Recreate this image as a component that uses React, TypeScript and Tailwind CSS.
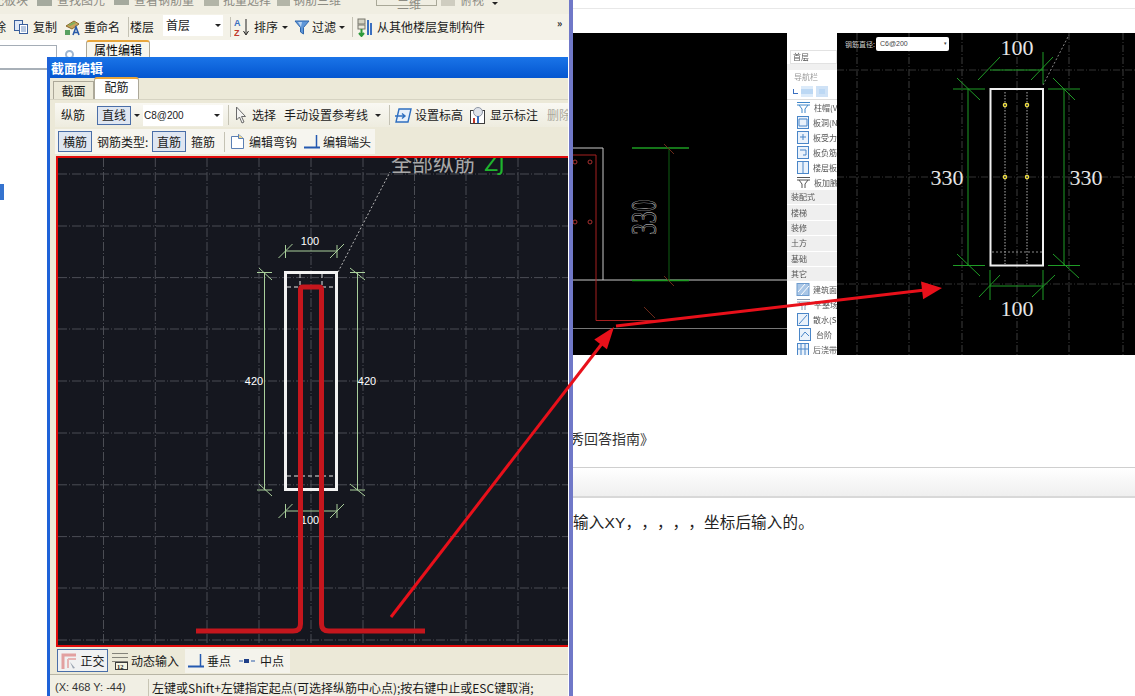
import React from "react";

const cjk = "font-['Noto_Sans_CJK_SC','Liberation_Sans',sans-serif]";

function Caret() {
  return <span className="inline-block w-0 h-0 border-x-[3px] border-x-transparent border-t-[3px] border-t-[#222]" />;
}

function Sep({ className = "" }: { className?: string }) {
  return <span className={`w-px h-[20px] bg-[#c4c2b4] ${className}`} />;
}

function CopyIcon() {
  return (
    <svg width="16" height="16" viewBox="0 0 16 16">
      <rect x="1.5" y="1.5" width="8" height="10" fill="#dfe8f6" stroke="#3a5f9c" />
      <rect x="6.5" y="5.5" width="8" height="9" fill="#fff" stroke="#3a5f9c" />
      <path d="M8 8h5M8 10h5M8 12h5" stroke="#6f8fc0" />
    </svg>
  );
}

function RenameIcon() {
  return (
    <svg width="17" height="17" viewBox="0 0 17 17">
      <path d="M2 7 10 2l5 3-7 5z" fill="#c9a35a" stroke="#8a6a2c" />
      <path d="M4 6l6-3 2 1-6 3z" fill="#7fb05a" />
      <rect x="1" y="11" width="5" height="5" fill="#58a060" />
      <path d="M9 16l3-8 3 8M10 13.5h4" fill="none" stroke="#2a5aa8" strokeWidth="1.6" />
    </svg>
  );
}

function SortIcon() {
  return (
    <svg width="17" height="19" viewBox="0 0 17 19">
      <text x="0" y="8" fontSize="9" fontWeight="700" fill="#3a6fc0" fontFamily="Liberation Sans">A</text>
      <text x="0" y="18" fontSize="9" fontWeight="700" fill="#c0392b" fontFamily="Liberation Sans">Z</text>
      <path d="M12 1v15M9.5 13l2.5 4 2.5-4" fill="none" stroke="#222" />
    </svg>
  );
}

function FilterIcon() {
  return (
    <svg width="16" height="16" viewBox="0 0 16 16">
      <path d="M1 2h14L9.5 8.5V15l-3-2V8.5z" fill="#5f97d8" stroke="#2f66ac" />
      <path d="M4 3h4L7 8z" fill="#b8d4f2" />
    </svg>
  );
}

function FloorCopyIcon() {
  return (
    <svg width="16" height="19" viewBox="0 0 16 19">
      <rect x="1" y="1" width="7" height="5" fill="#d4d2c4" stroke="#77766c" />
      <rect x="1" y="7" width="7" height="4" fill="#e9e7da" stroke="#77766c" />
      <path d="M4.5 11v6M2 15l2.5 3 2.5-3" stroke="#2d9a3c" strokeWidth="2" fill="none" />
      <rect x="10" y="2" width="2" height="15" fill="#3a6fc0" />
      <rect x="13" y="5" width="2" height="12" fill="#3a6fc0" />
    </svg>
  );
}

function CursorIcon() {
  return (
    <svg width="12" height="18" viewBox="0 0 12 18">
      <path d="M1.5 1v13l3-3 2.5 6 2-1-2.5-5.500H10.500z" fill="#f4f4f2" stroke="#6a6a6a" />
    </svg>
  );
}

function ElevationIcon() {
  return (
    <svg width="17" height="17" viewBox="0 0 17 17">
      <path d="M4 2h12l-3 13H1z" fill="#e8f0fa" stroke="#2f6fc0" strokeWidth="1.400" />
      <path d="M0 9h9M7 6.500 10 9l-3 2.500" fill="none" stroke="#2f6fc0" strokeWidth="1.400" />
    </svg>
  );
}

function LabelIcon() {
  return (
    <svg width="15" height="17" viewBox="0 0 15 17">
      <rect x="0.500" y="3.500" width="14" height="13" fill="#fff" stroke="#3c3c3c" />
      <circle cx="8" cy="5" r="4.500" fill="#dfe3ea" stroke="#8d95a3" />
      <rect x="3" y="11" width="2" height="5" fill="#c0392b" />
      <rect x="7" y="9" width="2" height="7" fill="#3a6fc0" />
    </svg>
  );
}

function HookIcon() {
  return (
    <svg width="16" height="17" viewBox="0 0 16 17">
      <path d="M1.500 3.500h7v-2l5 4v10h-12z" fill="#fff" stroke="#5a7fb4" />
      <path d="M8.500 1.500v4h5" fill="#f3d98c" stroke="#5a7fb4" />
    </svg>
  );
}

function EndIcon() {
  return (
    <svg width="16" height="16" viewBox="0 0 16 16">
      <path d="M0 13.500h16" stroke="#2459b0" strokeWidth="2" />
      <path d="M12.500 1v13" stroke="#2459b0" strokeWidth="1.500" />
    </svg>
  );
}

function MidIcon() {
  return (
    <svg width="16" height="8" viewBox="0 0 16 8">
      <path d="M0 4h4M12 4h4" stroke="#6f8fc0" strokeWidth="1.500" />
      <rect x="5" y="2" width="5" height="4" fill="#1f3f88" />
    </svg>
  );
}

function OrthoIcon() {
  return (
    <svg width="18" height="18" viewBox="0 0 18 18">
      <path d="M3 17V3h13" fill="none" stroke="#e2a0a0" strokeWidth="3" />
      <path d="M8 7v9M8 7h8" stroke="#e6b4b4" strokeWidth="2" />
      <path d="M10 10l5 6-2 .5z" fill="#9ba5b2" />
    </svg>
  );
}

function DynamicIcon() {
  return (
    <svg width="16" height="18" viewBox="0 0 16 18">
      <path d="M0 1.500h16M0 5.500h16M0 9.500h16" stroke="#85837a" />
      <rect x="3.500" y="10.500" width="12" height="7" fill="#f7f4e2" stroke="#3c3c3c" />
      <text x="5" y="16.500" fontSize="6.500" fontWeight="700" fill="#222" fontFamily="Liberation Serif">12</text>
    </svg>
  );
}

function ToolButton({ children, className = "" }: { children: React.ReactNode; className?: string }) {
  return (
    <span className={`flex items-center justify-center border border-[#4a6ea8] bg-[#dfe6f1] ${className}`}>{children}</span>
  );
}

function AppToolbars() {
  return (
    <>
      <div className="h-[14px] shrink-0 overflow-hidden bg-[#f0eee2]">
        <div className="flex items-center h-[12px] -mt-[6px] text-[12px] text-[#8d8c84] whitespace-nowrap [&>*]:shrink-0">
          <span className="ml-[-8px]">配板块</span>
          <span className="w-[15px] h-[12px] ml-[9px] bg-[#a5aa9e]" />
          <span className="ml-[5px]">查找图元</span>
          <span className="w-[15px] h-[10px] ml-[9px] bg-[#a5aa9e]" />
          <span className="ml-[5px]">查看钢筋量</span>
          <span className="w-[15px] h-[12px] ml-[10px] bg-[#b3b5a8]" />
          <span className="ml-[4px]">批量选择</span>
          <span className="w-[13px] h-[12px] ml-[6px] bg-[#b3b5a8]" />
          <span className="ml-[3px]">钢筋三维</span>
          <span className="w-[61px] h-[12px] ml-[35px] border border-[#a9a898] pl-[20px]">二维</span>
          <span className="w-[14px] h-[12px] ml-[4px] bg-[#cfcdc0]" />
          <span className="ml-[5px]">俯视</span>
          <span className="ml-[8px]"><Caret /></span>
        </div>
      </div>
      <div className="h-[26px] shrink-0 flex items-center bg-[#f4f2e8] text-[12px] text-[#1a1a1a] whitespace-nowrap [&>*]:shrink-0">
        <span className="ml-[-6px] w-[12px]">除</span>
        <span className="ml-[7px] flex"><CopyIcon /></span>
        <span className="ml-[4px]">复制</span>
        <span className="ml-[7px] flex"><RenameIcon /></span>
        <span className="ml-[3px]">重命名</span>
        <Sep className="ml-[8px]" />
        <span className="ml-[1px]">楼层</span>
        <span className="ml-[9px] w-[60px] h-[21px] bg-white flex items-center justify-between pl-[3px] pr-[2px] -mt-[4px]">
          首层
          <Caret />
        </span>
        <Sep className="ml-[7px]" />
        <span className="ml-[3px] flex"><SortIcon /></span>
        <span className="ml-[3px]">排序</span>
        <span className="ml-[4px] flex"><Caret /></span>
        <span className="ml-[6px] flex"><FilterIcon /></span>
        <span className="ml-[2px]">过滤</span>
        <span className="ml-[3px] flex"><Caret /></span>
        <Sep className="ml-[7px]" />
        <span className="ml-[4px] flex"><FloorCopyIcon /></span>
        <span className="ml-[4px]">从其他楼层复制构件</span>
        <span className="ml-[72px] -mt-[10px] text-[10px] font-bold">»</span>
      </div>
      <div className="h-[18px] shrink-0 flex items-start bg-white pl-[86px]">
        <span className="w-[64px] h-[18px] flex items-center justify-center border-x border-[#aca899] border-t-2 border-t-[#e8a63c] rounded-t-[3px] bg-[#f7f6ee] text-[12px]">
          属性编辑
        </span>
      </div>
    </>
  );
}

function LeftFolder() {
  return (
    <div className="relative flex-1 bg-white">
      <div className="absolute left-0 -top-[13px] w-[57px] h-[24px] border-y border-r border-y-[#a5adb6] border-r-[#a5adb6] bg-white" />
      <div className="absolute left-[65px] -top-[8px] w-[9px] h-[9px] rounded-full border-2 border-[#9fb6d0]" />
      <div className="absolute left-0 top-[10px] w-[48px] h-[2px] bg-[#a8b0b8]" />
      <div className="absolute left-0 top-[126px] w-[4px] h-[16px] bg-[#3573cf]" />
    </div>
  );
}

const gridX = [103.5, 155.3, 207, 259, 311, 363, 414.5, 466, 518];
const gridY = [174, 226, 277.6, 329, 381, 433, 484.8, 536.6, 588, 640];

function Tick({ x, y }: { x: number; y: number }) {
  return <path d={`M${x - 7} ${y + 7}L${x + 7} ${y - 7}`} stroke="#a9cf9b" strokeWidth="1" />;
}

function SectionCanvas() {
  const green = "#a9cf9b";
  return (
    <svg className="block w-full h-full" viewBox="56 156 512 491">
      <rect x="56" y="156" width="512" height="491" fill="#15171f" />
      {gridX.map((x) => (
        <path key={x} d={`M${x} 158V645`} stroke="#4b4d54" strokeDasharray="9 2 1 2" />
      ))}
      {gridY.map((y) => (
        <path key={y} d={`M58 ${y}H568`} stroke="#4b4d54" strokeDasharray="9 2 1 2" />
      ))}
      <path d="M338 272 390 172" stroke="#b8b8b8" strokeDasharray="2 2" />
      <text x="391" y="171" fontSize="21" fill="#a8a8a8" fontFamily="Noto Sans CJK SC">全部纵筋</text>
      <text x="484" y="171" fontSize="21" fill="#1fb52e" fontFamily="DejaVu Sans">ZJ</text>

      <path d="M285.500 251H337" stroke={green} />
      <path d="M285.500 245V258M337 245V258" stroke={green} />
      <Tick x={285.500} y={251} />
      <Tick x={337} y={251} />
      <text x="310" y="245" textAnchor="middle" fontSize="11" fill="#fff" fontFamily="Liberation Sans">100</text>

      <path d="M264.500 272V490M357.500 272V490" stroke={green} />
      <path d="M257 272.500H272M257 490H272M350 272.500H365M350 490H365" stroke={green} />
      <path d="M259 268 272 280M259 484 272 496M350 268 365 280M350 484 365 496" stroke={green} />
      <text x="254" y="385" textAnchor="middle" fontSize="11" fill="#fff" fontFamily="Liberation Sans">420</text>
      <text x="367" y="385" textAnchor="middle" fontSize="11" fill="#fff" fontFamily="Liberation Sans">420</text>

      <path d="M285.500 511H337" stroke={green} />
      <path d="M285.500 504V518M337 504V518" stroke={green} />
      <Tick x={285.500} y={511} />
      <Tick x={337} y={511} />
      <text x="310" y="524" textAnchor="middle" fontSize="11" fill="#fff" fontFamily="Liberation Sans">100</text>

      <rect x="285.500" y="272.500" width="51" height="217" fill="none" stroke="#f2f2f2" strokeWidth="3" />
      <path d="M287 287H336M287 476H336M300 274V287M322 274V287" stroke="#e8e8e8" strokeDasharray="4 3" />
      <path
        d="M196 631H293Q300.500 631 300.500 624V289.500Q300.500 287 303 287H319Q321.500 287 321.500 289.500V624Q321.500 631 329 631H425"
        fill="none"
        stroke="#c5161d"
        strokeWidth="5"
      />
      <rect x="57" y="157" width="512" height="489" fill="none" stroke="#e20a0a" strokeWidth="2" />
    </svg>
  );
}

function SectionDialog() {
  return (
    <div className="absolute left-[47px] top-[57px] bottom-0 w-[521px] flex flex-col border-l-[3px] border-[#1e62d8] bg-[#ece9d8] text-[12px] text-[#1a1a1a] whitespace-nowrap">
      <div className="h-[21px] shrink-0 flex items-center pl-[1px] bg-gradient-to-b from-[#1a74e8] to-[#0456d0] text-[13px] font-bold text-white">
        截面编辑
      </div>
      <div className="h-[22px] shrink-0 flex items-end pl-[3px] border-b border-[#d6d3c2]">
        <span className="w-[41px] h-[18px] flex items-center justify-center border border-[#aca899] border-b-0 bg-[#ece9d8]">截面</span>
        <span className="w-[45px] h-[22px] flex items-center justify-center border-x border-[#aca899] border-t-2 border-t-[#e8a63c] rounded-t-[3px] bg-white pb-[4px]">配筋</span>
      </div>
      <div className="h-[24px] shrink-0 mt-[3px] ml-[5px] flex items-center pl-[6px] bg-gradient-to-b from-[#f9f8f3] to-[#eeecdf] overflow-hidden [&>*]:shrink-0">
        <span className="w-[24px]">纵筋</span>
        <ToolButton className="ml-[12px] w-[34px] h-[19px]">直线</ToolButton>
        <span className="ml-[3px] flex"><Caret /></span>
        <span className="ml-[3px] w-[80px] h-[21px] bg-white flex items-center justify-between pl-[1px] pr-[3px]">
          <span className="font-['Liberation_Sans',sans-serif] text-[10px]">C8@200</span>
          <Caret />
        </span>
        <Sep className="ml-[5px]" />
        <span className="ml-[6px] flex"><CursorIcon /></span>
        <span className="ml-[5px] w-[24px]">选择</span>
        <span className="ml-[8px] w-[84px]">手动设置参考线</span>
        <span className="ml-[7px] flex"><Caret /></span>
        <Sep className="ml-[8px]" />
        <span className="ml-[5px] flex"><ElevationIcon /></span>
        <span className="ml-[3px] w-[48px]">设置标高</span>
        <span className="ml-[7px] flex"><LabelIcon /></span>
        <span className="ml-[5px] w-[48px]">显示标注</span>
        <span className="ml-[9px] text-[#aaa89c]">删除</span>
      </div>
      <div className="h-[25px] shrink-0 mt-[2px] ml-[5px] flex items-center">
        <div className="flex items-center h-full pl-[3px] pr-[4px] bg-[#f6f5ef]">
          <ToolButton className="w-[34px] h-[21px]">横筋</ToolButton>
          <span className="ml-[5px] w-[52px]">钢筋类型:</span>
          <ToolButton className="ml-[3px] w-[34px] h-[21px]">直筋</ToolButton>
          <span className="ml-[5px] w-[24px]">箍筋</span>
          <Sep className="ml-[9px]" />
          <span className="ml-[5px] flex"><HookIcon /></span>
          <span className="ml-[3px] w-[48px]">编辑弯钩</span>
          <span className="ml-[7px] flex"><EndIcon /></span>
          <span className="ml-[3px] w-[48px]">编辑端头</span>
        </div>
      </div>
      <div className="h-[491px] shrink-0 mt-[2px] ml-[6px]">
        <SectionCanvas />
      </div>
      <div className="h-[28px] shrink-0 flex items-center pl-[7px] border-b border-[#b8b5a5]">
        <ToolButton className="w-[51px] h-[23px] gap-[2px] bg-[#f0f1f2]">
          <OrthoIcon />
          <span>正交</span>
        </ToolButton>
        <span className="ml-[4px] flex"><DynamicIcon /></span>
        <span className="ml-[3px] w-[48px]">动态输入</span>
        <div className="ml-[6px] h-[24px] flex items-center pl-[3px] pr-[6px] bg-[#f4f3ec]">
          <EndIcon />
          <span className="ml-[3px] w-[24px]">垂点</span>
          <span className="ml-[8px] flex"><MidIcon /></span>
          <span className="ml-[5px]">中点</span>
        </div>
      </div>
      <div className="flex-1 flex pt-[4px] bg-[#f1efe4] overflow-hidden">
        <span className="w-[99px] pl-[5px] border-r border-[#c8c5b4] text-[#333] font-['Liberation_Sans',sans-serif] text-[11px]">(X: 468 Y: -44)</span>
        <span className="pl-[3px]">左键或Shift+左键指定起点(可选择纵筋中心点);按右键中止或ESC键取消;</span>
      </div>
    </div>
  );
}

function FirstDrawing() {
  return (
    <svg className="block w-[214px] h-[322px] shrink-0" viewBox="573 33 214 322">
      <rect x="573" y="33" width="214" height="322" fill="#000" />
      <path d="M573 148H603V280M573 280H787" fill="none" stroke="#c9c9c9" />
      <path d="M573 155H596V320.500H660" fill="none" stroke="#a52020" />
      <path d="M573 328.500H787" stroke="#777" />
      <path d="M632 148H689M632 280.500H689" stroke="#1d9c22" strokeWidth="1.500" />
      <path d="M669 148V280" stroke="#0f5f12" />
      <path d="M664 144 674 154M664 276 674 286M644 307 655 318" stroke="#6b2a1a" />
      {[162, 222].map((y) => (
        <g key={y}>
          <circle cx="575" cy={y} r="2" fill="none" stroke="#a83030" />
          <circle cx="590" cy={y} r="2" fill="none" stroke="#a83030" />
        </g>
      ))}
      <text
        transform="translate(656 235) rotate(-90) scale(1.300 1.950)"
        fontSize="18"
        fill="#000"
        stroke="#dcdcdc"
        strokeWidth="0.250"
        fontFamily="Liberation Serif"
      >
        330
      </text>
    </svg>
  );
}

function SideRow({ label, icon }: { label: string; icon: React.ReactNode }) {
  return (
    <div className="h-[15px] flex items-center">
      <span className="w-[17px] ml-[9px] flex justify-center">{icon}</span>
      <span className="ml-[3px] whitespace-nowrap">{label}</span>
    </div>
  );
}

function SideSection({ label }: { label: string }) {
  return <div className="h-[15.4px] pl-[4px] flex items-center bg-[#efefef] border-b border-white">{label}</div>;
}

function CapIcon({ color = "#3f86c9" }: { color?: string }) {
  return (
    <svg width="15" height="13" viewBox="0 0 15 13">
      <path d="M1 1.500h13M1 4h13M3 4l3 4v4M12 4 9 8v4" fill="none" stroke={color} />
    </svg>
  );
}

function BoxIcon({ d = "M4 6h6M7 3v6" }: { d?: string }) {
  return (
    <svg width="14" height="13" viewBox="0 0 14 13">
      <rect x="1.500" y="0.500" width="11" height="12" fill="#eaf2fb" stroke="#4a86c8" />
      <path d={d} fill="none" stroke="#4a86c8" />
    </svg>
  );
}

function HatchIcon() {
  return (
    <svg width="14" height="13" viewBox="0 0 14 13">
      <rect x="1" y="0.500" width="12" height="12" fill="#a9c6e6" stroke="#6f9cce" />
      <path d="M2 9 9 1M5 12 13 3" stroke="#fff" />
    </svg>
  );
}

function SoftwareSidebar() {
  return (
    <div className={`w-[50px] h-[322px] shrink-0 overflow-hidden bg-white text-[8px] text-[#555] blur-[0.5px] ${cjk}`}>
      <div className="h-[17px] bg-white" />
      <div className="ml-[3px] h-[14px] pl-[2px] flex items-center border border-[#e2e2e2]">首层</div>
      <div className="h-[6px] bg-[#f0f0f0]" />
      <div className="h-[13px] pl-[7px] flex items-center text-[#999]">导航栏</div>
      <div className="h-[17px] flex items-center gap-[3px] pl-[6px] border-b border-[#ddd]">
        <span className="w-[5px] h-[5px] border-l border-b border-[#3a6fc0]" />
        <span className="w-[12px] h-[11px] bg-[#bcd8f4] border-y-[3px] border-[#dcebfa]" />
        <span className="w-[12px] h-[11px] bg-[#bcd8f4] border-[3px] border-[#cfe2f6]" />
      </div>
      <SideRow label="柱帽(V)" icon={<CapIcon />} />
      <SideRow label="板洞(N)" icon={<BoxIcon d="M3 3h8v7H3z" />} />
      <SideRow label="板受力" icon={<BoxIcon />} />
      <SideRow label="板负筋(" icon={<BoxIcon d="M4 4h6v5H7" />} />
      <SideRow label="楼层板" icon={<BoxIcon d="M7 0v13" />} />
      <SideRow label="板加腋(" icon={<CapIcon color="#555" />} />
      <SideSection label="装配式" />
      <SideSection label="楼梯" />
      <SideSection label="装修" />
      <SideSection label="土方" />
      <SideSection label="基础" />
      <SideSection label="其它" />
      <SideRow label="建筑面" icon={<HatchIcon />} />
      <SideRow label="平整场" icon={<CapIcon color="#8a9ab0" />} />
      <SideRow label="散水(S)" icon={<BoxIcon d="M3 11 11 2" />} />
      <SideRow label="台阶" icon={<BoxIcon d="M3 9 7 4l4 4" />} />
      <SideRow label="后浇带(" icon={<BoxIcon d="M5 0v13M9 0v13M2 6h10" />} />
    </div>
  );
}

function SecondDrawing() {
  const green = "#1f9c26";
  const serif = "Liberation Serif";
  return (
    <div className="relative flex-1 h-[322px] overflow-hidden">
      <svg className="block w-[298px] h-[322px]" viewBox="837 33 298 322">
        <rect x="837" y="33" width="298" height="322" fill="#000" />
        {[857, 909, 962, 1017, 1069, 1123].map((x) => (
          <path key={x} d={`M${x} 33V355`} stroke="#3d3d3d" strokeDasharray="7 2 1 2" />
        ))}
        {[70, 177, 284].map((y) => (
          <path key={y} d={`M837 ${y}H1135`} stroke="#333" strokeDasharray="7 2 1 2" />
        ))}
        <path d="M1043 85 1069 35" stroke="#888" strokeDasharray="2 2" />
        <path d="M990 70H1043M1043 52V84M978 80 1000 57M1031 80 1053 57" stroke={green} fill="none" />
        <path d="M968 89V265.500M1064 89V265.500M953 89H985M953 265.500H985M1048 89H1080M1048 265.500H1080" stroke={green} fill="none" />
        <path d="M957 78 980 100M957 254 980 276M1053 78 1075 100M1053 254 1079 278" stroke={green} fill="none" />
        <path d="M990 286H1043M990 270V300M1043 270V300M979 297 1000 275M1032 297 1055 275" stroke={green} fill="none" />
        <path d="M1005 92V264M1027 92V264" stroke="#b0b0b0" strokeDasharray="1.500 1.500" />
        <path d="M992 252H1042" stroke="#8a8a8a" strokeDasharray="2 2" />
        <rect x="990.500" y="89" width="52.500" height="176.500" fill="none" stroke="#f0f0f0" strokeWidth="2" />
        {[105, 177].map((y) => (
          <g key={y}>
            <circle cx="1005" cy={y} r="1.700" fill="none" stroke="#f0e040" strokeWidth="1.200" />
            <circle cx="1027" cy={y} r="1.700" fill="none" stroke="#f0e040" strokeWidth="1.200" />
          </g>
        ))}
        <g fill="#e6e6e6" fontFamily={serif} fontSize="22" textAnchor="middle">
          <text x="1017" y="55">100</text>
          <text x="947" y="185">330</text>
          <text x="1086" y="185">330</text>
          <text x="1017" y="316">100</text>
        </g>
      </svg>
      <div className={`absolute left-[8px] top-[4px] flex items-center text-[7px] text-[#ccc] ${cjk}`}>
        <span className="w-[28px] whitespace-nowrap">钢筋直径:</span>
        <span className="ml-[3px] w-[73px] h-[14px] rounded-[2px] bg-white pl-[4px] pr-[2px] flex items-center justify-between text-[#444] font-['Liberation_Sans',sans-serif] text-[7px]">
          C6@200
          <span className="text-[5px]">▾</span>
        </span>
      </div>
    </div>
  );
}

function Arrows() {
  return (
    <svg className="absolute inset-0 z-20 pointer-events-none" width="1135" height="696" viewBox="0 0 1135 696">
      <path d="M391 617 604 341" stroke="#e8101a" strokeWidth="3" />
      <polygon points="614,327 606.900,349.300 594.300,339.500" fill="#e8101a" />
      <path d="M616 326 925 290" stroke="#e8101a" strokeWidth="3" />
      <polygon points="942,288 923.100,299.300 921.100,281.400" fill="#e8101a" />
    </svg>
  );
}

export default function App() {
  return (
    <div className={`relative flex w-[1135px] h-[696px] overflow-hidden bg-white ${cjk}`}>
      <div className="relative z-10 flex w-[573px] shrink-0">
        <div className="relative flex flex-col w-[569px] overflow-hidden">
          <AppToolbars />
          <LeftFolder />
          <SectionDialog />
        </div>
        <div className="w-[4px] bg-[#7078c8]" />
      </div>
      <main className="flex-1 min-w-0 overflow-hidden">
        <div className="h-[9px] border-b border-[#e8e8e8]" />
        <div className="mt-[24px] flex">
          <FirstDrawing />
          <SoftwareSidebar />
          <SecondDrawing />
        </div>
        <p className="mt-[73px] -ml-[3px] h-[20px] leading-[20px] text-[14px] text-[#333] whitespace-nowrap">秀回答指南》</p>
        <div className="mt-[19px] h-[31px] border-t border-[#cfcfcf] border-b-2 border-b-[#d8d8d8] bg-gradient-to-b from-white to-[#efefef]" />
        <p className="mt-[13px] h-[24px] leading-[24px] text-[15.5px] tracking-[0.2px] text-[#222] whitespace-nowrap font-['Liberation_Sans','Noto_Sans_CJK_SC',sans-serif] [text-spacing-trim:space-all]">输入XY，，，，，坐标后输入的。</p>
      </main>
      <Arrows />
    </div>
  );
}
